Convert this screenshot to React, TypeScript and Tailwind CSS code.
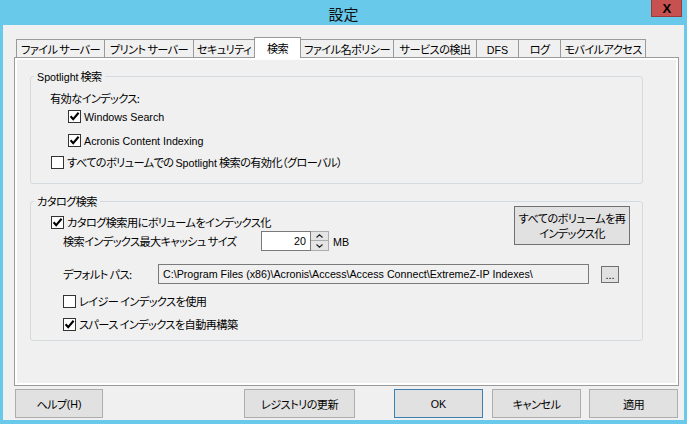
import React from "react";

function L({ children }: { children: React.ReactNode }) {
  return <span className="font-['Liberation_Sans',sans-serif] text-[10.7px] tracking-normal [font-feature-settings:normal]">{children}</span>;
}

function Box({ checked }: { checked?: boolean }) {
  return (
    <span className="w-[13px] h-[13px] border border-[#333333] bg-white flex items-center justify-center shrink-0">
      {checked && (
        <svg width="11" height="11" viewBox="0 0 11 11">
          <path d="M1.6 5.2 L4.2 8.2 L9.6 1.8" stroke="#000" strokeWidth="2.1" fill="none" />
        </svg>
      )}
    </span>
  );
}

function Check({ checked, className, children }: { checked?: boolean; className: string; children: React.ReactNode }) {
  return (
    <div className={"flex items-center " + className}>
      <Box checked={checked} />
      <span className="ml-[3px] whitespace-nowrap">{children}</span>
    </div>
  );
}

function Btn({ className, children }: { className: string; children: React.ReactNode }) {
  return (
    <div className={"h-[29px] bg-[#e1e1e1] border flex items-center justify-center " + className}>{children}</div>
  );
}

const tabs: { label: string; w: number }[] = [
  { label: "ファイル サーバー", w: 89 },
  { label: "プリント サーバー", w: 90 },
  { label: "セキュリティ", w: 62 },
  { label: "検索", w: 47 },
  { label: "ファイル名ポリシー", w: 94 },
  { label: "サービスの検出", w: 84 },
  { label: "DFS", w: 43 },
  { label: "ログ", w: 43 },
  { label: "モバイルアクセス", w: 86 },
];

export default function App() {
  return (
    <div className="w-[687px] h-[424px] bg-[#69c9ea] flex flex-col overflow-hidden font-['Noto_Sans_CJK_JP',sans-serif] [font-feature-settings:'palt'] text-[11.2px] tracking-[-0.6px] text-black leading-[16px]">
      {/* title bar */}
      <div className="relative h-[25px] shrink-0 flex items-center justify-center">
        <span className="text-[15px] leading-none tracking-normal text-[#111111] pt-[1px]">設定</span>
        <div className="absolute right-[5px] top-0 w-[31px] h-[17px] bg-[#c75050] border border-t-0 border-[#9a3b3b] flex items-center justify-center">
          <span className="font-['Liberation_Sans',sans-serif] font-bold text-[13px] leading-none text-black">X</span>
        </div>
      </div>

      {/* body */}
      <div className="mx-[3px] mb-[4px] flex-1 bg-[#f0f0f0] flex flex-col pt-[12px] pb-[2px]">
        <div className="ml-[11px] w-[665px] flex flex-col">
          {/* tab strip */}
          <div className="h-[20px] flex items-end pl-[2px]">
            {tabs.map((t, i) => {
              const sel = t.label === "検索";
              return (
                <div
                  key={t.label}
                  style={{ width: t.w }}
                  className={
                    (i === 0 ? "" : "-ml-px ") +
                    (sel
                      ? "relative z-10 h-[21px] -mb-px bg-white border border-b-0 border-[#9a9a9a] flex items-center justify-center"
                      : "h-[18px] bg-[#f0f0f0] border border-b-0 border-[#9a9a9a] flex items-center justify-center pt-[1px]")
                  }
                >
                  <span className="whitespace-nowrap">{t.label === "DFS" ? <L>DFS</L> : t.label}</span>
                </div>
              );
            })}
          </div>

          {/* page */}
          <div className="h-[329px] border border-[#9a9a9a] bg-white p-[2px] flex">
            <div className="flex-1 bg-[#f0f0f0] flex flex-col">
              {/* Spotlight group */}
              <fieldset className="ml-[13px] mt-[9px] w-[613px] border border-[#d5dade] rounded-[3px] pb-[13px]">
                <legend className="ml-[3px] px-[3px] h-[15px] leading-[15px] whitespace-nowrap">
                  <L>Spotlight</L> 検索
                </legend>
                <div className="ml-[19px] mt-[6px] h-[16px] flex items-center">有効なインデックス:</div>
                <Check checked className="ml-[37px] mt-[2px] h-[16px]">
                  <L>Windows Search</L>
                </Check>
                <Check checked className="ml-[37px] mt-[8px] h-[16px]">
                  <L>Acronis Content Indexing</L>
                </Check>
                <Check className="ml-[20px] mt-[6px] h-[16px]">
                  すべてのボリュームでの <L>Spotlight</L> 検索の有効化（グローバル）
                </Check>
              </fieldset>

              {/* Catalog group */}
              <fieldset className="ml-[13px] mt-[10px] w-[613px] border border-[#d5dade] rounded-[3px] pb-[7px]">
                <legend className="ml-[3px] px-[3px] h-[15px] leading-[15px] whitespace-nowrap">カタログ検索</legend>
                <div className="flex justify-between items-start">
                  <div className="flex flex-col">
                    <Check checked className="ml-[20px] mt-[4px] h-[18px]">
                      カタログ検索用にボリュームをインデックス化
                    </Check>
                    <div className="ml-[32px] h-[20px] flex items-center">
                      <span className="w-[198px] whitespace-nowrap">検索インデックス最大キャッシュ サイズ</span>
                      <div className="w-[50px] h-[20px] bg-white border border-[#7a7a7a] flex items-center justify-end pr-[4px]">
                        <L>20</L>
                      </div>
                      <div className="w-[18px] h-[20px] flex flex-col">
                        <div className="h-[10px] bg-[#e5e5e5] border border-l-0 border-[#acacac] flex items-center justify-center">
                          <svg width="7" height="4" viewBox="0 0 7 4">
                            <path d="M0.5 3.5 L3.5 0.8 L6.5 3.5" stroke="#222" strokeWidth="1.2" fill="none" />
                          </svg>
                        </div>
                        <div className="h-[10px] bg-[#e5e5e5] border border-t-0 border-l-0 border-[#acacac] flex items-center justify-center">
                          <svg width="7" height="4" viewBox="0 0 7 4">
                            <path d="M0.5 0.5 L3.5 3.2 L6.5 0.5" stroke="#222" strokeWidth="1.2" fill="none" />
                          </svg>
                        </div>
                      </div>
                      <span className="ml-[4px]">
                        <L>MB</L>
                      </span>
                    </div>
                  </div>
                  <div className="-mt-[3px] mr-[12px] w-[116px] h-[39px] bg-[#e1e1e1] border border-[#707070] flex flex-col items-center justify-center leading-[15px]">
                    <span className="whitespace-nowrap">すべてのボリュームを再</span>
                    <span className="whitespace-nowrap">インデックス化</span>
                  </div>
                </div>
                <div className="mt-[13px] ml-[32px] h-[20px] flex items-center">
                  <span className="w-[95px] whitespace-nowrap">デフォルト パス:</span>
                  <div className="w-[431px] h-[20px] bg-[#f0f0f0] border border-[#7a7a7a] flex items-center pl-[4px] overflow-hidden whitespace-nowrap">
                    <L>{"C:\\Program Files (x86)\\Acronis\\Access\\Access Connect\\ExtremeZ-IP Indexes\\"}</L>
                  </div>
                  <div className="ml-[12px] w-[18px] h-[17px] bg-[#e1e1e1] border border-[#707070] flex items-center justify-center">
                    <span className="font-['Liberation_Sans',sans-serif] text-[11px] tracking-normal leading-none pt-[3px]">...</span>
                  </div>
                </div>
                <Check className="ml-[32px] mt-[8px] h-[18px]">レイジー インデックスを使用</Check>
                <Check checked className="ml-[32px] mt-[5px] h-[18px]">
                  スパース インデックスを自動再構築
                </Check>
              </fieldset>
            </div>
          </div>
        </div>

        {/* buttons */}
        <div className="mt-[3px] flex">
          <Btn className="ml-[12px] w-[88px] border-[#adadad]">
            ヘルプ<L>(H)</L>
          </Btn>
          <Btn className="ml-[141px] w-[111px] border-[#adadad]">レジストリの更新</Btn>
          <Btn className="ml-[39px] w-[89px] border-[#3c7fb1]">
            <L>OK</L>
          </Btn>
          <Btn className="ml-[9px] w-[89px] border-[#adadad]">キャンセル</Btn>
          <Btn className="ml-[8px] w-[89px] border-[#adadad]">適用</Btn>
        </div>
      </div>
    </div>
  );
}
